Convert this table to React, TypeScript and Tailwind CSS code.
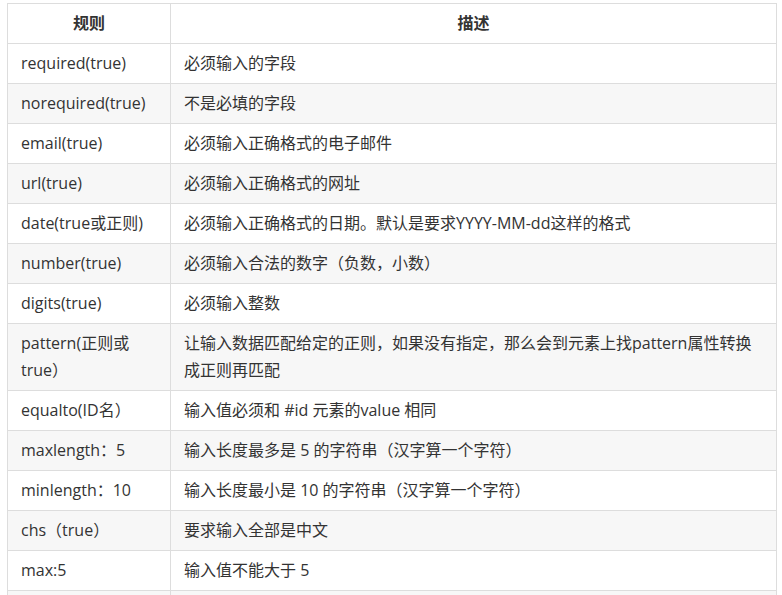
import React from "react";

const rows: [React.ReactNode, React.ReactNode][] = [
  ["required(true)", "必须输入的字段"],
  ["norequired(true)", "不是必填的字段"],
  ["email(true)", "必须输入正确格式的电子邮件"],
  ["url(true)", "必须输入正确格式的网址"],
  ["date(true或正则)", "必须输入正确格式的日期。默认是要求YYYY-MM-dd这样的格式"],
  ["number(true)", "必须输入合法的数字（负数，小数）"],
  ["digits(true)", "必须输入整数"],
  [
    "pattern(正则或true）",
    "让输入数据匹配给定的正则，如果没有指定，那么会到元素上找pattern属性转换成正则再匹配",
  ],
  ["equalto(ID名）", "输入值必须和 #id 元素的value 相同"],
  ["maxlength：5", "输入长度最多是 5 的字符串（汉字算一个字符）"],
  ["minlength：10", "输入长度最小是 10 的字符串（汉字算一个字符）"],
  ["chs（true）", "要求输入全部是中文"],
  ["max:5", "输入值不能大于 5"],
  ["\u00a0", "\u00a0"],
];

export default function App() {
  return (
    <div
      className="h-[595px] w-[782px] overflow-hidden bg-white pt-[3px] pl-[7px] text-[16px] leading-[27px] text-[#333]"
      style={{ fontFamily: '"Open Sans", "Noto Sans CJK SC", sans-serif' }}
    >
      <table className="w-[770px] table-fixed border-collapse">
        <colgroup>
          <col className="w-[163px]" />
          <col />
        </colgroup>
        <thead>
          <tr className="bg-white">
            <th className="border border-[#ddd] px-[13px] py-[6px] text-center font-bold">规则</th>
            <th className="border border-[#ddd] px-[13px] py-[6px] text-center font-bold">描述</th>
          </tr>
        </thead>
        <tbody>
          {rows.map(([a, b], i) => (
            <tr key={i} className={i % 2 === 1 ? "bg-[#f7f7f7]" : "bg-white"}>
              <td className="border border-[#ddd] px-[13px] py-[6px] align-middle">{a}</td>
              <td className="border border-[#ddd] px-[13px] py-[6px] align-middle">{b}</td>
            </tr>
          ))}
        </tbody>
      </table>
    </div>
  );
}
